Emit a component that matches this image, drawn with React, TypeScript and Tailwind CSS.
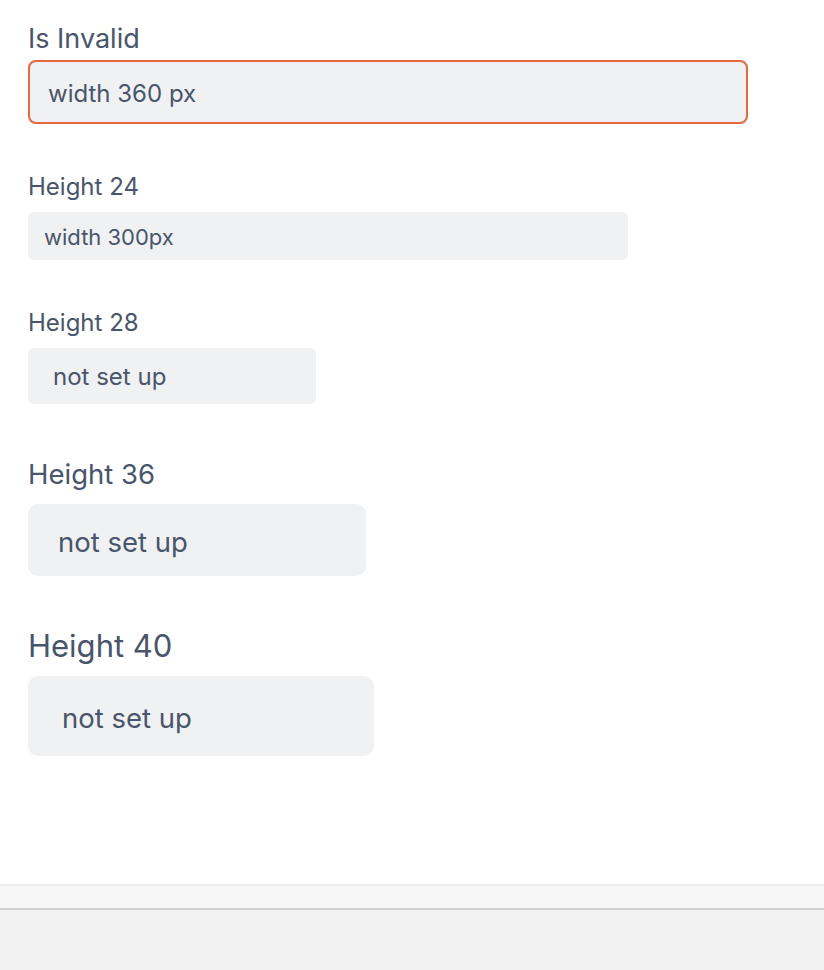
import React from "react";

const font = { fontFamily: "Inter, 'Noto Sans', sans-serif" };

export default function App() {
  return (
    <div className="h-[970px] w-[824px] flex flex-col bg-white text-[#48556a] overflow-hidden" style={font}>
      <div className="flex-1 flex flex-col items-start pt-[21px] px-[28px]">
        <label className="text-[27px] leading-[36px] mb-[3px]">Is Invalid</label>
        <div className="h-[64px] w-[720px] border-2 border-[#e5683f] rounded-[8px] bg-[#f0f1f3] flex items-center px-[18px] pt-[4px] text-[24px]">
          width 360 px
        </div>

        <label className="mt-[47px] text-[24px] leading-[32px] mb-[9px]">Height 24</label>
        <div className="h-[48px] w-[600px] rounded-[6px] bg-[#f0f1f3] flex items-center pl-[16px] pt-[2px] text-[22px]">
          width 300px
        </div>

        <label className="mt-[47px] text-[24px] leading-[32px] mb-[9px]">Height 28</label>
        <div className="h-[56px] w-[288px] rounded-[6px] bg-[#f0f1f3] flex items-center pl-[25px] pt-[2px] text-[24px]">
          not set up
        </div>

        <label className="mt-[52px] text-[27.5px] leading-[36px] mb-[12px]">Height 36</label>
        <div className="h-[72px] w-[338px] rounded-[10px] bg-[#f0f1f3] flex items-center pl-[30px] pt-[6px] text-[27.5px]">
          not set up
        </div>

        <label className="mt-[50px] text-[31px] leading-[40px] mb-[10px]">Height 40</label>
        <div className="h-[80px] w-[346px] rounded-[10px] bg-[#f0f1f3] flex items-center pl-[34px] pt-[6px] text-[27.5px]">
          not set up
        </div>
      </div>
      <div className="flex flex-col">
        <div className="h-[2px] bg-[#ebebeb]" />
        <div className="h-[22px] bg-[#f7f7f7]" />
        <div className="h-[2px] bg-[#d1d1d1]" />
        <div className="h-[60px] bg-[#f2f2f2]" />
      </div>
    </div>
  );
}
